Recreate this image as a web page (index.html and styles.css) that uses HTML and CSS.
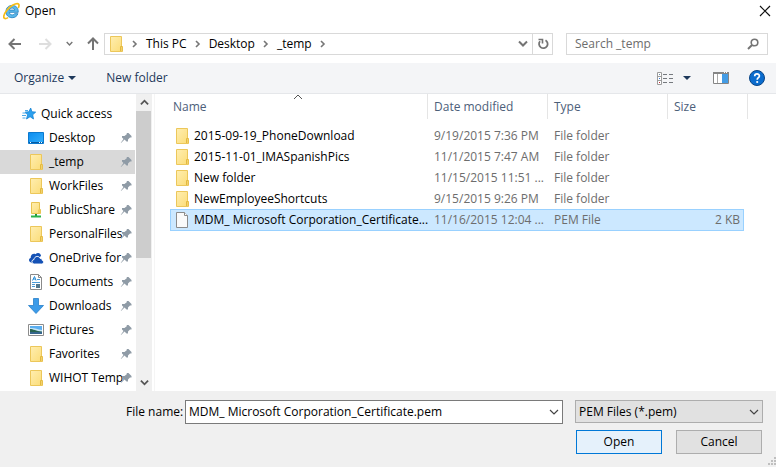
FILE: index.html
```html
<!DOCTYPE html>
<html lang="en">
<head>
<meta charset="utf-8">
<meta name="viewport" content="width=device-width, initial-scale=1">
<title>Open</title>
<link rel="stylesheet" href="styles.css">
</head>
<body>
<svg class="defs" width="0" height="0" aria-hidden="true">
  <defs>
    <linearGradient id="paper" x1="0" y1="0" x2="1" y2="1"><stop offset="0" stop-color="#ffeeb0"/><stop offset="1" stop-color="#fbdc77"/></linearGradient>
    <linearGradient id="screen" x1="0" y1="0" x2="1" y2="1"><stop offset="0" stop-color="#0a8cf0"/><stop offset="1" stop-color="#35b0fb"/></linearGradient>
    <symbol id="folder" viewBox="0 0 16 16"><path d="M2.500.5h11v10h1v5h-12z" fill="url(#paper)" stroke="#ecc75a"/><path d="M12.500 15V10.500h1.500V15" fill="#ffe9a0" stroke="#e3b93e"/></symbol>
    <symbol id="pin" viewBox="0 0 12 12"><path d="M6.500 1h2l3 3v1.500H10L8 7.500V9.500H6.500L4.500 7.500 1 11 .8 10.800 3.500 7 2 5.500V4h2.500L7 2z" fill="#8f9ba6"/></symbol>
    <symbol id="next" viewBox="0 0 6 8"><path d="M1 1l3 3-3 3" fill="none" stroke="#767676" stroke-width="1.600"/></symbol>
    <symbol id="down" viewBox="0 0 10 6"><path d="M1 1l4 4 4-4" fill="none" stroke="currentColor" stroke-width="1.200"/></symbol>
    <symbol id="bold-down" viewBox="0 0 10 7"><path d="M1 1.500l4 4 4-4" fill="none" stroke="currentColor" stroke-width="2"/></symbol>
    <symbol id="caret" viewBox="0 0 8 4"><path d="M0 0h8L4 4z" fill="#1e395b"/></symbol>
  </defs>
</svg>

<header class="titlebar">
  <svg class="app-icon" viewBox="0 0 18 18" aria-hidden="true">
    <path d="M15.200 10.300H6.300c.2 1.700 1.400 2.600 3 2.600 1.100 0 1.800-.4 2.300-1.200h3.300c-.8 2.500-2.900 4-5.800 4-3.700 0-6.100-2.500-6.100-6.100 0-3.700 2.500-6.200 6.200-6.200 4 0 6.300 2.800 6 6.900zM6.400 8.100h5.300c-.2-1.300-1.200-2.100-2.600-2.100-1.500 0-2.400.8-2.700 2.100z" fill="#5bb9ea" stroke="#2a86c4" stroke-width=".9"/>
    <path d="M5 15.600C2.600 17.100.4 17 .8 14.200 1.300 10.600 5.500 5.500 10 3c3.300-1.900 6-2 6 .4 0 1-.3 1.800-.8 2.600" fill="none" stroke="#f5bd17" stroke-width="1.700"/>
  </svg>
  <h1 class="title">Open</h1>
  <button class="plain close" type="button" aria-label="Close"><svg width="12" height="12" viewBox="0 0 12 12"><path d="M1 1l10 10M11 1L1 11" stroke="#111" stroke-width="1.200"/></svg></button>
</header>

<nav class="navbar" aria-label="Location">
  <div class="history">
    <button class="plain" type="button" aria-label="Back"><svg width="14" height="12" viewBox="0 0 14 12"><path d="M13 6H2M6.500 1l-5 5 5 5" fill="none" stroke="#747474" stroke-width="2"/></svg></button>
    <button class="plain" type="button" aria-label="Forward"><svg width="14" height="12" viewBox="0 0 14 12"><path d="M1 6h11M7.500 1l5 5-5 5" fill="none" stroke="#dedede" stroke-width="2"/></svg></button>
    <button class="plain" type="button" aria-label="Recent locations"><svg width="7" height="5"><use href="#bold-down"/></svg></button>
    <button class="plain" type="button" aria-label="Up"><svg width="12" height="14" viewBox="0 0 12 14"><path d="M6 13V2M1 6.500l5-5 5 5" fill="none" stroke="#747474" stroke-width="2"/></svg></button>
  </div>
  <div class="address">
    <svg class="icon" aria-hidden="true"><use href="#folder"/></svg>
    <svg class="next" aria-hidden="true"><use href="#next"/></svg>
    <a href="#">This PC</a>
    <svg class="next" aria-hidden="true"><use href="#next"/></svg>
    <a href="#">Desktop</a>
    <svg class="next" aria-hidden="true"><use href="#next"/></svg>
    <a href="#">_temp</a>
    <svg class="next" aria-hidden="true"><use href="#next"/></svg>
    <button class="plain previous" type="button" aria-label="Previous locations"><svg width="10" height="7"><use href="#bold-down"/></svg></button>
    <button class="plain refresh" type="button" aria-label="Refresh"><svg width="12" height="12" viewBox="0 0 12 12"><path d="M8.500 2.200A4.300 4.300 0 1 1 3 3.200" fill="none" stroke="#747474" stroke-width="1.800"/><path d="M1.500 1.500H5.500V5.500" fill="none" stroke="#747474" stroke-width="1.600"/></svg></button>
  </div>
  <div class="search">
    <input type="search" aria-label="Search _temp" placeholder="Search _temp">
    <svg width="12" height="12" viewBox="0 0 12 12" aria-hidden="true"><circle cx="7.500" cy="4.500" r="3.300" fill="none" stroke="#747474" stroke-width="1.600"/><path d="M5 7L1 11" stroke="#747474" stroke-width="2"/></svg>
  </div>
</nav>

<div class="toolbar">
  <button class="plain" type="button">Organize <svg class="caret"><use href="#caret"/></svg></button>
  <button class="plain" type="button">New folder</button>
  <div class="view-tools">
    <button class="plain" type="button" aria-label="Change view">
      <svg width="16" height="13" viewBox="0 0 16 13"><path d="M.5.5h4v12h-4zM.5 4.500h4M.5 8.500h4" fill="#fff" stroke="#9c9c9c"/><path d="M2 2h1v1H2z" fill="#6c8ea8"/><path d="M2 6h1v1H2z" fill="#3978d4"/><path d="M2 10h1v1H2z" fill="#c4262e"/><path d="M6 2.500h4M12 2.500h4M6 6.500h4M12 6.500h4M6 10.500h4M12 10.500h4" stroke="#75797e"/></svg>
      <svg class="caret"><use href="#caret"/></svg>
    </button>
    <button class="plain" type="button" aria-label="Preview pane"><svg width="16" height="12" viewBox="0 0 16 12"><path d="M.5.500h15v11H.5z" fill="#fff" stroke="#858585"/><path d="M0 0h16v2H0z" fill="#858585"/><path d="M4.500 2v9" stroke="#aaa"/><path d="M9 2h6v9H9z" fill="#449ce5"/><path d="M11 0h1v1h-1zM13 0h1v1h-1z" fill="#fff"/></svg></button>
    <button class="plain" type="button" aria-label="Help"><svg width="16" height="16" viewBox="0 0 16 16"><circle cx="8" cy="8" r="7.500" fill="#0b6cce" stroke="#0a4586"/><path d="M5.700 6.200C5.700 3.200 10.400 3.300 10.400 6c0 1.700-2.200 1.700-2.200 3.700" fill="none" stroke="#fff" stroke-width="1.700"/><circle cx="8.200" cy="12" r="1.100" fill="#fff"/></svg></button>
  </div>
</div>

<main class="browser">
  <nav class="places" aria-label="Places">
    <ul>
      <li><a class="root" href="#"><svg class="icon" viewBox="0 0 16 16" aria-hidden="true"><path d="M9.700 2l1.200 3.800 3.800.3-3 2.700.8 4.200-3.400-2.300-3.600 2.300 1.100-4.200L4 6.100l3.800-.3z" fill="#2ba0ee" stroke="#1683d3" stroke-width=".8"/><path d="M4 4.500h3M1.500 7h4M1 9.500h4M1.500 12h3" stroke="#4aa9e8"/></svg><span>Quick access</span></a></li>
      <li><a href="#"><svg class="icon" viewBox="0 0 16 16" aria-hidden="true"><path d="M.5 2.500h15v11H.5z" fill="url(#screen)" stroke="#0b79ce"/><path d="M1 12.500h14" stroke="#075aa0"/><path d="M2 12h1v1H2zM11 12h1v1h-1zM13 12h1v1h-1z" fill="#fff"/></svg><span>Desktop</span><svg class="pin"><use href="#pin"/></svg></a></li>
      <li><a class="current" href="#"><svg class="icon"><use href="#folder"/></svg><span>_temp</span><svg class="pin"><use href="#pin"/></svg></a></li>
      <li><a href="#"><svg class="icon"><use href="#folder"/></svg><span>WorkFiles</span><svg class="pin"><use href="#pin"/></svg></a></li>
      <li><a href="#"><svg class="icon" viewBox="0 0 16 16" aria-hidden="true"><path d="M3.500.5h8v7h1v4h-9z" fill="url(#paper)" stroke="#e8c352"/><path d="M11 11V7.500" stroke="#e3b93e"/><path d="M8 12v2" stroke="#1d9440" stroke-width="2"/><path d="M3 14.500h10" stroke="#2bb34b" stroke-width="2"/></svg><span>PublicShare</span><svg class="pin"><use href="#pin"/></svg></a></li>
      <li><a href="#"><svg class="icon"><use href="#folder"/></svg><span>PersonalFiles</span><svg class="pin"><use href="#pin"/></svg></a></li>
      <li><a href="#"><svg class="icon" viewBox="0 0 16 16" aria-hidden="true"><path d="M3 12.500C.5 12 .3 8.500 2.700 8 2.500 4.500 5.500 3 7.500 4.300 9.500 2 12.800 3 13 6L9 9l-5 4z" fill="#1451b5"/><path d="M6.500 14c-3.500-.2-3.300-4.300-.5-4.500C6.300 5.800 11.300 5.400 12.200 8.500c1.500-.2 2 .8 1.900 1.700 2.100.5 1.700 3.600-.3 3.800z" fill="#1451b5" stroke="#fff" stroke-width=".9"/></svg><span>OneDrive for</span><svg class="pin"><use href="#pin"/></svg></a></li>
      <li><a href="#"><svg class="icon" viewBox="0 0 16 16" aria-hidden="true"><path d="M2.500.5h8l3 3v12h-11z" fill="#fff" stroke="#8a8a8a"/><path d="M10.500.5v3h3" fill="none" stroke="#8a8a8a"/><path d="M4.500 6.500l2-4 1.500 4M5 5h2.500" fill="none" stroke="#238bd8"/><path d="M9 5.500h3M4 8.500h8M4 10.500h3M4 12.500h3" stroke="#4a9bd8"/><path d="M8 10h4v4H8z" fill="#52778d"/></svg><span>Documents</span><svg class="pin"><use href="#pin"/></svg></a></li>
      <li><a href="#"><svg class="icon" viewBox="0 0 16 16" aria-hidden="true"><path d="M5.500.5h5v7h5L8 15.500.5 7.500h5z" fill="#3b9be9" stroke="#277fc9" stroke-width=".8"/></svg><span>Downloads</span><svg class="pin"><use href="#pin"/></svg></a></li>
      <li><a href="#"><svg class="icon" viewBox="0 0 16 16" aria-hidden="true"><path d="M.5 2.500h15v11H.5z" fill="#fff" stroke="#8c8c8c"/><path d="M2 4h12v8H2z" fill="#5aaef0"/><path d="M2 6c4-.5 7 1 12 2v2H2z" fill="#c6e5f7"/><path d="M2 7c3 0 6 2 12 2.500V10H2z" fill="#286450"/><path d="M2 10h12v2H2z" fill="#35658c"/></svg><span>Pictures</span><svg class="pin"><use href="#pin"/></svg></a></li>
      <li><a href="#"><svg class="icon"><use href="#folder"/></svg><span>Favorites</span><svg class="pin"><use href="#pin"/></svg></a></li>
      <li><a href="#"><svg class="icon"><use href="#folder"/></svg><span>WIHOT Temp</span><svg class="pin"><use href="#pin"/></svg></a></li>
    </ul>
  </nav>
  <div class="scrollbar">
    <button class="plain" type="button" aria-label="Scroll up"><svg class="flip" width="9" height="7"><use href="#bold-down"/></svg></button>
    <div class="track"><div class="thumb"></div></div>
    <button class="plain" type="button" aria-label="Scroll down"><svg width="9" height="7"><use href="#bold-down"/></svg></button>
  </div>
  <section class="files" aria-label="Files">
    <table>
      <colgroup><col><col class="medium"><col class="medium"><col class="small"></colgroup>
      <thead>
        <tr>
          <th class="first" aria-sort="ascending"><div>Name<svg class="sort" viewBox="0 0 10 6"><path d="M1 5l4-4 4 4" fill="none" stroke="#555"/></svg></div></th>
          <th><div>Date modified</div></th>
          <th><div>Type</div></th>
          <th class="last"><div>Size</div></th>
        </tr>
      </thead>
      <tbody>
        <tr><td class="name"><svg class="icon"><use href="#folder"/></svg><span>2015-09-19_PhoneDownload</span></td><td>9/19/2015 7:36 PM</td><td>File folder</td><td></td></tr>
        <tr><td class="name"><svg class="icon"><use href="#folder"/></svg><span>2015-11-01_IMASpanishPics</span></td><td>11/1/2015 7:47 AM</td><td>File folder</td><td></td></tr>
        <tr><td class="name"><svg class="icon"><use href="#folder"/></svg><span>New folder</span></td><td>11/15/2015 11:51 ...</td><td>File folder</td><td></td></tr>
        <tr><td class="name"><svg class="icon"><use href="#folder"/></svg><span>NewEmployeeShortcuts</span></td><td>9/15/2015 9:26 PM</td><td>File folder</td><td></td></tr>
        <tr class="selected"><td class="name"><svg class="icon" viewBox="0 0 16 16"><path d="M2.500.5h8l3 3v12h-11z" fill="#fafafa" stroke="#8b8b8b"/><path d="M10.500.5v3h3" fill="#fff" stroke="#8b8b8b"/></svg><span>MDM_ Microsoft Corporation_Certificate...</span></td><td>11/16/2015 12:04 ...</td><td>PEM File</td><td class="size">2 KB</td></tr>
      </tbody>
    </table>
  </section>
</main>

<form class="footer">
  <div class="fields">
    <label for="filename">File name:</label>
    <div class="combo">
      <input id="filename" type="text" value="MDM_ Microsoft Corporation_Certificate.pem">
      <button class="plain" type="button" aria-label="Recent file names"><svg width="10" height="6"><use href="#down"/></svg></button>
    </div>
    <div class="filter">
      <select aria-label="File type"><option>PEM Files (*.pem)</option></select>
      <svg width="10" height="6" aria-hidden="true"><use href="#down"/></svg>
    </div>
  </div>
  <div class="actions">
    <button class="action primary" type="button">Open</button>
    <button class="action" type="button">Cancel</button>
  </div>
  <svg class="grip" viewBox="0 0 8 8" aria-hidden="true"><path d="M6 0h2v2H6zM3 3h2v2H3zM6 3h2v2H6zM0 6h2v2H0zM3 6h2v2H3zM6 6h2v2H6z" fill="#bfbfbf"/></svg>
</form>
</body>
</html>
```
FILE: styles.css
```css
* { box-sizing: border-box; }

body {
  margin: 0;
  min-height: 100vh;
  display: flex;
  flex-direction: column;
  background: #fff;
  color: #000;
  font: 12px/16px "Open Sans", "Noto Sans", sans-serif;
}

svg { display: block; flex: none; }
a { color: inherit; text-decoration: none; }
button, input, select { font: inherit; color: inherit; }

.defs { position: absolute; }

.plain {
  display: flex;
  align-items: center;
  justify-content: center;
  padding: 0;
  border: 0;
  background: none;
}

.icon { width: 16px; height: 16px; }
.caret { width: 8px; height: 4px; }
.next { width: 6px; height: 8px; }

/* Title bar */
.titlebar {
  display: flex;
  align-items: center;
  height: 22px;
  padding: 0 5px 0 3px;
}
.app-icon { width: 18px; height: 18px; }
.title { margin: 0 auto 0 4px; font-size: 12px; font-weight: 400; }

/* Address row */
.navbar {
  display: flex;
  align-items: center;
  height: 41px;
  padding: 2px 8px 0;
}
.history {
  display: flex;
  align-items: center;
  gap: 14px;
  width: 96px;
  color: #747474;
}
.history .plain:nth-child(2) { margin-left: 2px; }

.address {
  flex: 1;
  display: flex;
  align-items: center;
  gap: 8px;
  height: 22px;
  padding-left: 3px;
  border: 1px solid #d9d9d9;
}
.previous { margin-left: auto; margin-right: -4px; color: #747474; }
.refresh { width: 20px; height: 20px; border-left: 1px solid #d9d9d9; }

.search {
  display: flex;
  align-items: center;
  width: 202px;
  height: 22px;
  margin-left: 13px;
  padding: 0 8px;
  border: 1px solid #d9d9d9;
}
.search input {
  flex: 1;
  min-width: 0;
  padding: 0;
  border: 0;
  outline: 0;
  background: none;
}
.search input::placeholder { color: #6d6d6d; opacity: 1; }

/* Command bar */
.toolbar {
  display: flex;
  align-items: center;
  gap: 30px;
  height: 31px;
  padding: 0 11px 0 14px;
  border-bottom: 1px solid #e5e7ea;
  background: #f4f5f7;
  color: #1e395b;
}
.toolbar .plain { gap: 4px; }
.view-tools { display: flex; align-items: center; gap: 20px; margin-left: auto; }
.view-tools .plain { gap: 10px; }
.view-tools .plain:first-child { margin-right: 2px; }

/* Places tree and file list */
.browser { flex: 1; display: flex; }

.places { width: 136px; padding-top: 8px; }
.places ul { margin: 0; padding: 0; list-style: none; }
.places a {
  display: flex;
  align-items: center;
  gap: 5px;
  height: 24px;
  margin-right: 1px;
  padding: 0 3px 0 28px;
}
.places a.root { padding-left: 21px; gap: 4px; }
.places a.current { background: #d9d9d9; }
.places span { flex: 1; min-width: 0; white-space: nowrap; }
.pin { width: 12px; height: 12px; margin-left: -4px; }

.scrollbar {
  display: flex;
  flex-direction: column;
  width: 16px;
  background: #f0f0f0;
  color: #555;
}
.scrollbar .plain { height: 17px; }
.flip { transform: rotate(180deg); }
.track { flex: 1; }
.thumb { width: 15px; height: 56%; background: #cdcdcd; }

.files {
  flex: 1;
  margin-left: 2px;
  padding: 0 32px 0 15px;
  border-left: 1px solid #f5f5f5;
}
table { width: 100%; table-layout: fixed; border-collapse: separate; border-spacing: 0; }
.medium { width: 120px; }
.small { width: 76px; }

th { padding: 0 0 6px; font-weight: 400; text-align: left; color: #4c607a; }
th div {
  position: relative;
  height: 25px;
  padding: 5px 0 4px 6px;
  border-right: 1px solid #e5e5e5;
}
th.first div { padding-left: 3px; }
th.last div { margin-right: -4px; }
.sort { position: absolute; top: 0; left: 50%; width: 10px; height: 6px; margin-left: -6px; }

td {
  height: 21px;
  padding: 0 0 0 6px;
  border: 0 solid #99d1ff;
  white-space: nowrap;
  color: #6d6d6d;
}
td.name { color: #000; padding-left: 4px; }
.name .icon, .name span { display: inline-block; vertical-align: middle; }
.name .icon { margin-right: 4px; }
.size { text-align: right; padding-right: 3px; }
.selected td { height: 22px; border-width: 1px 0; background: #cce8ff; }
.selected td:first-child { border-left-width: 1px; padding-left: 3px; }
.selected td:last-child { border-right-width: 1px; }

/* File name, type and actions */
.footer {
  position: relative;
  height: 76px;
  padding: 9px 13px 0 126px;
  background: #f0f0f0;
}
.fields { display: flex; align-items: flex-start; }
.fields label { width: 59px; padding-top: 4px; white-space: nowrap; }
.combo {
  flex: 1;
  display: flex;
  height: 24px;
  border: 1px solid #7a7a7a;
  background: #fff;
}
.combo input { flex: 1; min-width: 0; padding: 0 3px; border: 0; outline: 0; background: none; }
.combo .plain { width: 17px; color: #444; }
.filter { position: relative; width: 188px; margin-left: 12px; color: #000; }
.filter select {
  width: 100%;
  height: 23px;
  padding: 0 3px;
  border: 1px solid #adadad;
  border-radius: 0;
  background: #e1e1e1;
  appearance: none;
}
.filter svg { position: absolute; right: 4px; top: 9px; color: #444; pointer-events: none; }

.actions { display: flex; justify-content: flex-end; gap: 14px; margin: 6px 1px 0 0; }
.action {
  width: 86px;
  height: 24px;
  padding: 0;
  border: 1px solid #adadad;
  background: #e1e1e1;
}
.primary { border-color: #0078d7; background: #e5f1fb; }
.grip { position: absolute; right: 0; bottom: 2px; width: 8px; height: 8px; }
```
